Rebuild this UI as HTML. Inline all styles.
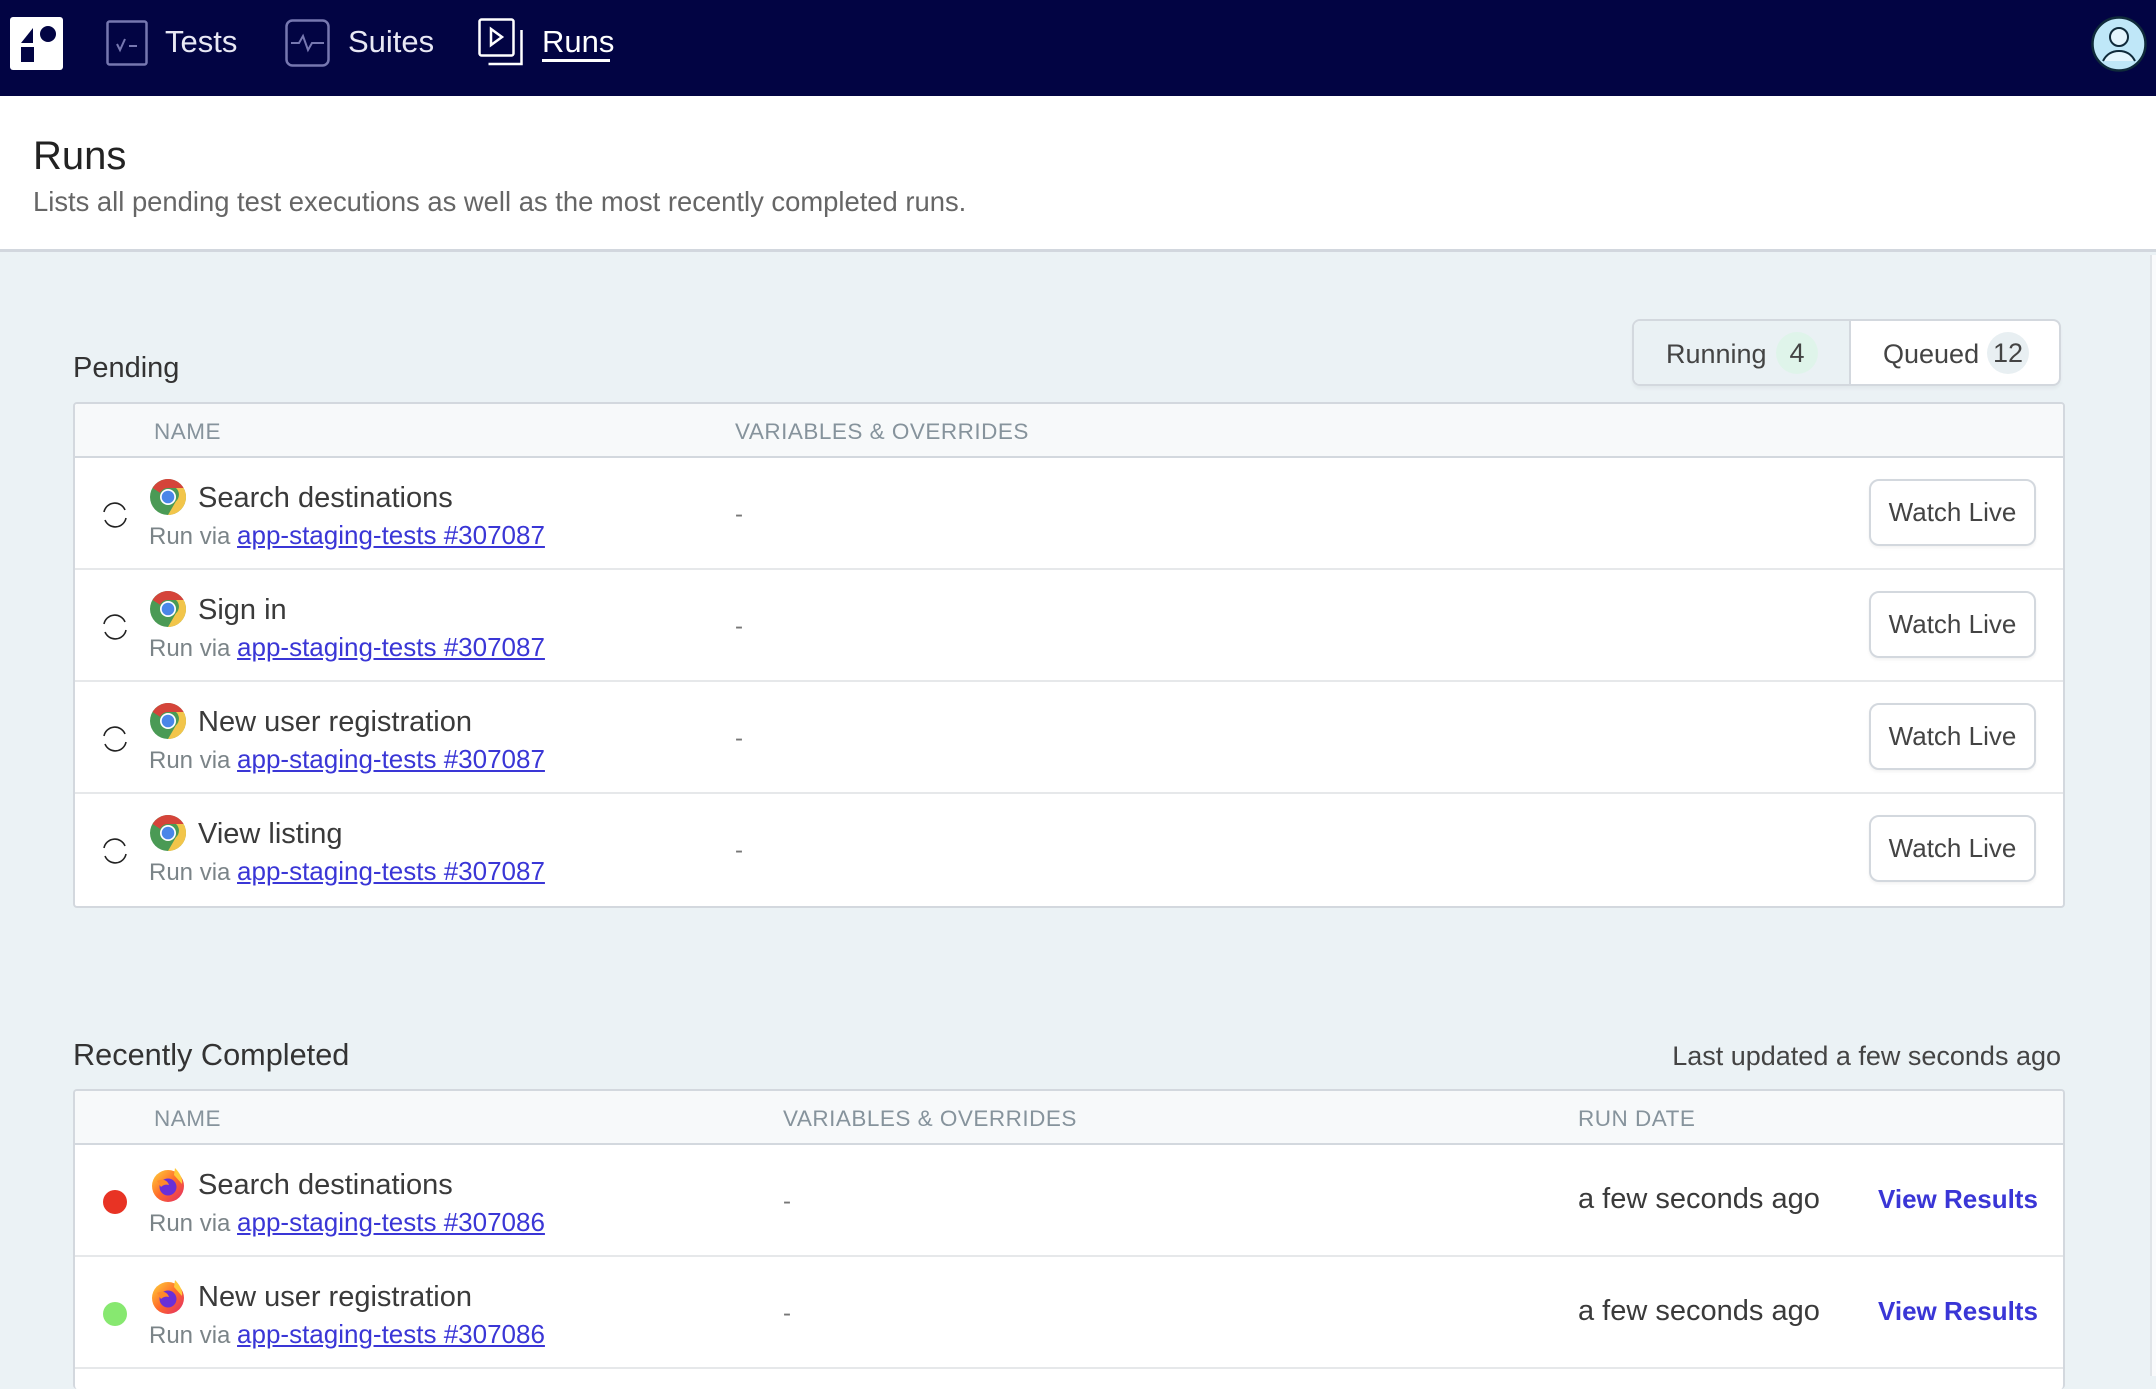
<!DOCTYPE html>
<html><head><meta charset="utf-8"><style>
*{box-sizing:border-box;margin:0;padding:0}
body{width:2156px;height:1376px;overflow:hidden;background:#ebf2f5;font-family:"Liberation Sans",Arial,sans-serif;color:#333;position:relative}
.abs{position:absolute}
.nav{left:0;top:0;width:2156px;height:96px;background:#020443}
.navt{color:#e8e8f4;font-size:31px;top:24px}
.hdr{left:0;top:96px;width:2156px;height:156px;background:#fff;border-bottom:3px solid #d2d7de}
.h2{font-size:29px;color:#333}
.tbl{left:73px;width:1992px;background:#fff;border:2px solid #d3d8de;border-radius:4px;overflow:hidden}
.th{position:absolute;top:0;left:0;right:0;height:54px;background:#f7f9fa;border-bottom:2px solid #d3d8de}
.th span{position:absolute;top:15px;font-size:22.5px;color:#86939c;letter-spacing:.5px}
.row{position:absolute;left:0;right:0;height:112px;border-bottom:2px solid #e6e8ea}
.title{position:absolute;left:123px;top:24px;font-size:29px;color:#3a3a3a}
.sub{position:absolute;left:74px;top:62px;font-size:24px;color:#7b8488}
.sub a{color:#3a36d6;text-decoration:underline;font-size:26px}
.dash{position:absolute;top:43px;font-size:24px;color:#777}
.btn{position:absolute;left:1794px;top:21px;width:167px;height:67px;border:2px solid #d3d8de;border-radius:10px;font-size:26px;color:#444;text-align:center;line-height:63px;background:#fff;box-shadow:0 2px 3px rgba(0,0,0,.05)}
.spin{position:absolute;left:25px;top:42px}
.ic{position:absolute;left:74px;top:20px}
.dot{position:absolute;left:28px;top:45px;width:24px;height:24px;border-radius:50%}
.date{position:absolute;left:1503px;top:38px;font-size:29px;color:#3a3a3a}
.vr{position:absolute;left:1803px;top:39px;font-size:26px;color:#3a36d6;font-weight:bold}
</style></head><body>
<div class="abs nav">
  <div class="abs" style="left:10px;top:17px;width:53px;height:53px;background:#fff;border-radius:3px">
    <svg width="53" height="53" viewBox="0 0 53 53"><polygon points="11,26 23,11 23,26" fill="#020443"/><circle cx="38" cy="17" r="8" fill="#020443"/><rect x="11" y="30" width="13" height="15" fill="#020443"/></svg>
  </div>
  <svg class="abs" style="left:106px;top:20px" width="42" height="46" viewBox="0 0 42 46"><rect x="1.5" y="1.5" width="39" height="43" rx="2" fill="none" stroke="#7677b0" stroke-width="2.5"/><path d="M11 24l3 6 5-11M23 26h8" fill="none" stroke="#7677b0" stroke-width="2"/></svg>
  <div class="abs navt" style="left:165px">Tests</div>
  <svg class="abs" style="left:285px;top:19px" width="45" height="48" viewBox="0 0 45 48"><rect x="1.5" y="1.5" width="42" height="45" rx="6" fill="none" stroke="#7677b0" stroke-width="2.5"/><path d="M6 24h8l4-7 5 14 4-7h12" fill="none" stroke="#7677b0" stroke-width="2"/></svg>
  <div class="abs navt" style="left:348px">Suites</div>
  <svg class="abs" style="left:478px;top:18px" width="47" height="48" viewBox="0 0 47 48"><rect x="1.5" y="1.5" width="34" height="36" rx="2" fill="none" stroke="#fff" stroke-width="2.5"/><path d="M43.5 12v34h-33" fill="none" stroke="#fff" stroke-width="2.5"/><path d="M13 11v16l11-8z" fill="none" stroke="#fff" stroke-width="2.5"/></svg>
  <div class="abs navt" style="left:542px;color:#fff">Runs</div>
  <div class="abs" style="left:542px;top:59px;width:68px;height:3px;background:#fff"></div>
  <svg class="abs" style="left:2091px;top:16px" width="56" height="56" viewBox="0 0 56 56"><circle cx="28" cy="28" r="26.5" fill="#bfe7f8" stroke="#0f2a3a" stroke-width="2.5"/><circle cx="28" cy="21" r="9" fill="#e3f5fd" stroke="#0f2a3a" stroke-width="2"/><path d="M12 45c4-8 10-10 16-10s12 2 16 10" fill="#e3f5fd" stroke="#0f2a3a" stroke-width="2"/></svg>
</div>
<div class="abs hdr">
  <div class="abs" style="left:33px;top:38px;font-size:40px;color:#222">Runs</div>
  <div class="abs" style="left:33px;top:90px;font-size:27.4px;color:#666">Lists all pending test executions as well as the most recently completed runs.</div>
</div>
<div class="abs" style="left:2150px;top:255px;width:6px;height:1121px;background:#fafbfc;border-left:2px solid #e0e4e8"></div>

<div class="abs h2" style="left:73px;top:352px">Pending</div>
<div class="abs" style="left:1632px;top:319px;width:429px;height:67px;border:2px solid #d3d8de;border-radius:8px;overflow:hidden;background:#fff;box-shadow:0 3px 3px rgba(0,0,0,.04)">
  <div class="abs" style="left:0;top:0;width:217px;height:65px;background:#eaf1f4;border-right:2px solid #d3d8de"></div>
  <div class="abs" style="left:32px;top:18px;font-size:27px;color:#444">Running</div>
  <div class="abs" style="left:142px;top:11px;width:42px;height:42px;border-radius:50%;background:#dff4ea;text-align:center;line-height:42px;font-size:27px;color:#444">4</div>
  <div class="abs" style="left:249px;top:18px;font-size:27px;color:#444">Queued</div>
  <div class="abs" style="left:353px;top:11px;width:42px;height:42px;border-radius:50%;background:#e8eff2;text-align:center;line-height:42px;font-size:27px;color:#444">12</div>
</div>

<div class="abs tbl" style="top:402px;height:506px">
  <div class="th"><span style="left:79px">NAME</span><span style="left:660px">VARIABLES &amp; OVERRIDES</span></div>
  <div class="row" style="top:54px">
    <svg class="spin" width="30" height="30" viewBox="0 0 30 30"><path d="M4 12a11 11 0 0 1 21-2M26 18a11 11 0 0 1-21 2" fill="none" stroke="#222" stroke-width="1.6"/></svg>
    <svg class="ic" width="38" height="38" viewBox="0 0 38 38"><circle cx="19" cy="19" r="18" fill="#4a9a55"/><path d="M19 1a18 18 0 0 1 15.6 9H19a9 9 0 0 0-8 4.8L3.6 10A18 18 0 0 1 19 1z" fill="#d5443a"/><path d="M34.6 10A18 18 0 0 1 19 37l7.8-13.5A9 9 0 0 0 27 10z" fill="#f2c54a"/><circle cx="19" cy="19" r="8" fill="#fff"/><circle cx="19" cy="19" r="6.3" fill="#4a86e8"/></svg>
    <div class="title">Search destinations</div>
    <div class="sub">Run via <a>app-staging-tests #307087</a></div>
    <div class="dash" style="left:660px">-</div>
    <div class="btn">Watch Live</div>
  </div>
  <div class="row" style="top:166px">
    <svg class="spin" width="30" height="30" viewBox="0 0 30 30"><path d="M4 12a11 11 0 0 1 21-2M26 18a11 11 0 0 1-21 2" fill="none" stroke="#222" stroke-width="1.6"/></svg>
    <svg class="ic" width="38" height="38" viewBox="0 0 38 38"><circle cx="19" cy="19" r="18" fill="#4a9a55"/><path d="M19 1a18 18 0 0 1 15.6 9H19a9 9 0 0 0-8 4.8L3.6 10A18 18 0 0 1 19 1z" fill="#d5443a"/><path d="M34.6 10A18 18 0 0 1 19 37l7.8-13.5A9 9 0 0 0 27 10z" fill="#f2c54a"/><circle cx="19" cy="19" r="8" fill="#fff"/><circle cx="19" cy="19" r="6.3" fill="#4a86e8"/></svg>
    <div class="title">Sign in</div>
    <div class="sub">Run via <a>app-staging-tests #307087</a></div>
    <div class="dash" style="left:660px">-</div>
    <div class="btn">Watch Live</div>
  </div>
  <div class="row" style="top:278px">
    <svg class="spin" width="30" height="30" viewBox="0 0 30 30"><path d="M4 12a11 11 0 0 1 21-2M26 18a11 11 0 0 1-21 2" fill="none" stroke="#222" stroke-width="1.6"/></svg>
    <svg class="ic" width="38" height="38" viewBox="0 0 38 38"><circle cx="19" cy="19" r="18" fill="#4a9a55"/><path d="M19 1a18 18 0 0 1 15.6 9H19a9 9 0 0 0-8 4.8L3.6 10A18 18 0 0 1 19 1z" fill="#d5443a"/><path d="M34.6 10A18 18 0 0 1 19 37l7.8-13.5A9 9 0 0 0 27 10z" fill="#f2c54a"/><circle cx="19" cy="19" r="8" fill="#fff"/><circle cx="19" cy="19" r="6.3" fill="#4a86e8"/></svg>
    <div class="title">New user registration</div>
    <div class="sub">Run via <a>app-staging-tests #307087</a></div>
    <div class="dash" style="left:660px">-</div>
    <div class="btn">Watch Live</div>
  </div>
  <div class="row" style="top:390px;border-bottom:none">
    <svg class="spin" width="30" height="30" viewBox="0 0 30 30"><path d="M4 12a11 11 0 0 1 21-2M26 18a11 11 0 0 1-21 2" fill="none" stroke="#222" stroke-width="1.6"/></svg>
    <svg class="ic" width="38" height="38" viewBox="0 0 38 38"><circle cx="19" cy="19" r="18" fill="#4a9a55"/><path d="M19 1a18 18 0 0 1 15.6 9H19a9 9 0 0 0-8 4.8L3.6 10A18 18 0 0 1 19 1z" fill="#d5443a"/><path d="M34.6 10A18 18 0 0 1 19 37l7.8-13.5A9 9 0 0 0 27 10z" fill="#f2c54a"/><circle cx="19" cy="19" r="8" fill="#fff"/><circle cx="19" cy="19" r="6.3" fill="#4a86e8"/></svg>
    <div class="title">View listing</div>
    <div class="sub">Run via <a>app-staging-tests #307087</a></div>
    <div class="dash" style="left:660px">-</div>
    <div class="btn">Watch Live</div>
  </div>
</div>

<div class="abs" style="left:73px;top:1037px;font-size:30.7px;color:#333">Recently Completed</div>
<div class="abs" style="right:95px;top:1041px;font-size:27px;color:#444">Last updated a few seconds ago</div>

<div class="abs tbl" style="top:1089px;height:300px;border-bottom:none">
  <div class="th"><span style="left:79px">NAME</span><span style="left:708px">VARIABLES &amp; OVERRIDES</span><span style="left:1503px">RUN DATE</span></div>
  <div class="row" style="top:54px">
    <div class="dot" style="background:#e83324"></div>
    <svg class="ic" width="38" height="38" viewBox="0 0 38 38"><defs><linearGradient id="fg" x1="0" y1="0" x2="1" y2="1"><stop offset="0" stop-color="#ffd43a"/><stop offset=".5" stop-color="#ff6a2a"/><stop offset="1" stop-color="#e12a6a"/></linearGradient></defs><circle cx="19" cy="21" r="16" fill="url(#fg)"/><path d="M26 3c4 4 8 10 7 16L25 10z" fill="#ffc93a"/><circle cx="19" cy="22" r="8.5" fill="#6a2fd8"/><path d="M8 16c4-2 10-2 12 4-3-1-6 0-8 2z" fill="#ff8a2a"/></svg>
    <div class="title">Search destinations</div>
    <div class="sub">Run via <a>app-staging-tests #307086</a></div>
    <div class="dash" style="left:708px">-</div>
    <div class="date">a few seconds ago</div>
    <div class="vr">View Results</div>
  </div>
  <div class="row" style="top:166px">
    <div class="dot" style="background:#87e870"></div>
    <svg class="ic" width="38" height="38" viewBox="0 0 38 38"><circle cx="19" cy="21" r="16" fill="url(#fg)"/><path d="M26 3c4 4 8 10 7 16L25 10z" fill="#ffc93a"/><circle cx="19" cy="22" r="8.5" fill="#6a2fd8"/><path d="M8 16c4-2 10-2 12 4-3-1-6 0-8 2z" fill="#ff8a2a"/></svg>
    <div class="title">New user registration</div>
    <div class="sub">Run via <a>app-staging-tests #307086</a></div>
    <div class="dash" style="left:708px">-</div>
    <div class="date">a few seconds ago</div>
    <div class="vr">View Results</div>
  </div>
</div>
</body></html>
